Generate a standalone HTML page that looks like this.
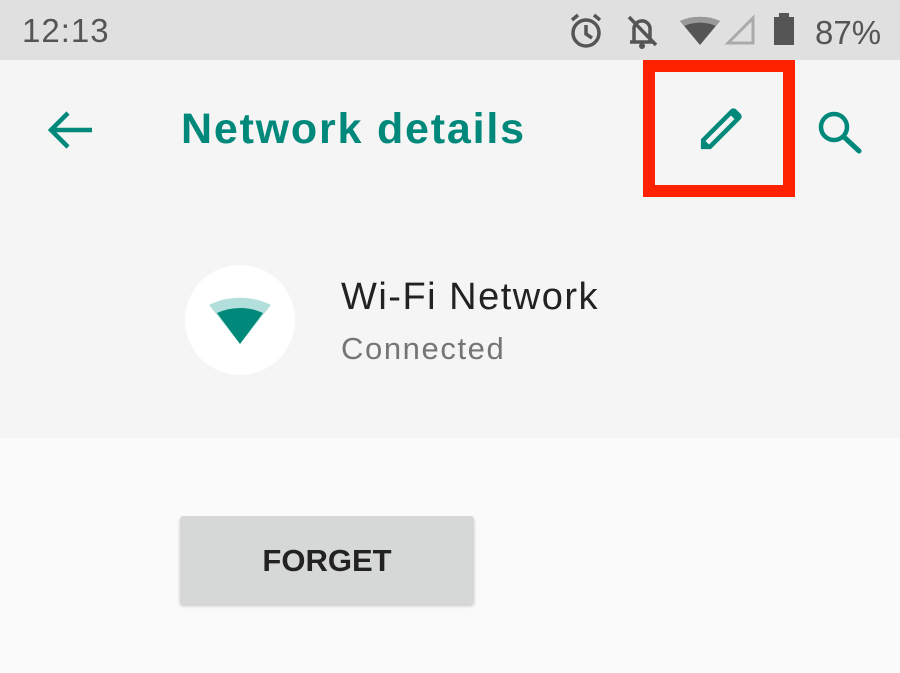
<!DOCTYPE html>
<html><head><style>
body{margin:0;width:900px;height:673px;overflow:hidden;background:#fafafa;font-family:"Liberation Sans",Roboto,sans-serif;position:relative}
.sb{position:absolute;left:0;top:0;width:900px;height:60px;background:#e0e0e0}
.hd{position:absolute;left:0;top:60px;width:900px;height:378px;background:#f5f5f5}
.t{position:absolute;white-space:nowrap}
</style></head><body>
<div class="sb"></div>
<div class="hd"></div>
<div class="t" style="left:22px;top:12px;font-size:33px;color:#555;letter-spacing:1px">12:13</div>
<svg style="position:absolute;left:560px;top:0" width="340" height="60" viewBox="0 0 340 60">
 <g fill="none" stroke="#555" stroke-width="3.5">
  <circle cx="26" cy="33" r="13"/>
  <path d="M26 25v9l6 4"/>
  <path d="M12 20l6-5M40 20l-6-5"/>
  <path d="M70 42h24M74 42V30a8 8 0 0 1 16-2v14M69 17l27 28"/>
 </g>
 <circle cx="82" cy="46" r="3" fill="#555"/>
 <path d="M120 21a50 50 0 0 1 40 0l-20 24z" fill="#555"/>
 <path d="M120 21a50 50 0 0 1 40 0l-4 5a40 40 0 0 0-32 0z" fill="#999"/>
 <path d="M168 43L193 18V43z" fill="none" stroke="#aaa" stroke-width="3"/>
 <rect x="214" y="17" width="20" height="28" fill="#555"/><rect x="219" y="13" width="10" height="5" fill="#555"/>
 <text x="255" y="44" font-size="33" fill="#555" font-family="Liberation Sans,sans-serif">87%</text>
</svg>
<svg style="position:absolute;left:46px;top:108px" width="48" height="44" viewBox="0 0 48 44"><path d="M46 22H6M22 5L5 22l17 17" fill="none" stroke="#00897b" stroke-width="4.5"/></svg>
<div class="t" style="left:181px;top:105px;font-size:43px;font-weight:bold;color:#00897b;letter-spacing:1.8px">Network details</div>
<div style="position:absolute;left:643px;top:60px;width:128px;height:113px;border:12px solid #ff2200"></div>
<svg style="position:absolute;left:690px;top:100px" width="60" height="60" viewBox="0 0 60 60"><g transform="rotate(-45 30 30)"><path d="M3 30l7-7h42a4 4 0 0 1 4 4v6a4 4 0 0 1-4 4H10z" fill="#00897b"/><path d="M12 27.5h36v5H12z" fill="#f5f5f5"/></g></svg>
<svg style="position:absolute;left:815px;top:105px" width="52" height="52" viewBox="0 0 52 52"><circle cx="19" cy="22" r="13" fill="none" stroke="#00897b" stroke-width="4.5"/><path d="M29 32l15 14" stroke="#00897b" stroke-width="5" stroke-linecap="round"/></svg>
<div style="position:absolute;left:185px;top:265px;width:110px;height:110px;border-radius:50%;background:#fff"></div>
<svg style="position:absolute;left:185px;top:265px" width="110" height="110" viewBox="0 0 110 110">
 <path d="M24 40a70 70 0 0 1 62 0L55 79z" fill="#b2dfdb"/>
 <path d="M32 48a55 55 0 0 1 46 0L55 79z" fill="#00897b"/>
</svg>
<div class="t" style="left:341px;top:276px;font-size:38px;color:#222;letter-spacing:1.5px">Wi-Fi Network</div>
<div class="t" style="left:341px;top:331px;font-size:31px;color:#757575;letter-spacing:1.6px">Connected</div>
<div style="position:absolute;left:180px;top:516px;width:294px;height:88px;background:#d6d7d7;border-radius:3px;box-shadow:0 2px 3px rgba(0,0,0,.2);text-align:center;line-height:90px;font-size:31px;font-weight:bold;color:#222;letter-spacing:0">FORGET</div>
</body></html>
